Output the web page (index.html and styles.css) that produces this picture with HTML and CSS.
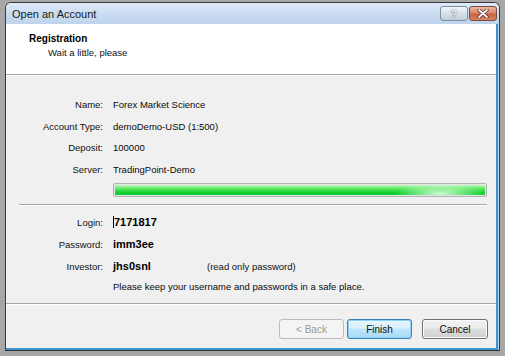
FILE: index.html
```html
<!DOCTYPE html>
<html>
<head>
<meta charset="utf-8">
<link rel="stylesheet" href="styles.css">
</head>
<body>
<div class="window">
  <div class="titlebar">
    <span class="title">Open an Account</span>
    <div class="caption-buttons">
      <div class="cap help"><span>?</span></div>
      <div class="cap close">
        <svg width="14" height="9" viewBox="0 0 14 9"><path d="M3 1 L11 8 M11 1 L3 8" stroke="#4a2a22" stroke-width="3.2" stroke-linecap="round"/><path d="M3 1 L11 8 M11 1 L3 8" stroke="#ffffff" stroke-width="1.7" stroke-linecap="round"/></svg>
      </div>
    </div>
  </div>
  <div class="client">
    <div class="header">
      <div class="h-title">Registration</div>
      <div class="h-sub">Wait a little, please</div>
    </div>
    <div class="hsep"></div>
    <div class="body">
      <div class="grid info">
        <div class="lbl">Name:</div><div class="val">Forex Market Science</div>
        <div class="lbl">Account Type:</div><div class="val">demoDemo-USD (1:500)</div>
        <div class="lbl">Deposit:</div><div class="val">100000</div>
        <div class="lbl">Server:</div><div class="val">TradingPoint-Demo</div>
      </div>
      <div class="progress"><div class="fill"></div></div>
      <div class="sep"></div>
      <div class="grid creds">
        <div class="lbl">Login:</div><div class="val bold"><span class="caret"></span>7171817</div>
        <div class="lbl">Password:</div><div class="val bold">imm3ee</div>
        <div class="lbl">Investor:</div><div class="val"><span class="bold inv">jhs0snl</span><span class="note">(read only password)</span></div>
        <div class="lbl last"></div><div class="val last">Please keep your username and passwords in a safe place.</div>
      </div>
      <div class="bsep"></div>
      <div class="buttons">
        <div class="btn disabled">&lt; Back</div>
        <div class="btn default">Finish</div>
        <div class="btn normal">Cancel</div>
      </div>
    </div>
  </div>
</div>
</body>
</html>
```

FILE: styles.css
```css
* { box-sizing: border-box; }
html, body { margin: 0; padding: 0; }
body {
  width: 505px;
  height: 356px;
  background: #a7a7a7;
  font-family: "Liberation Sans", Arial, sans-serif;
  font-size: 9.5px;
  color: #111;
  overflow: hidden;
}
.window {
  margin: 2px 0 0 5px;
  width: 495px;
  height: 349px;
  border: 1px solid #3a3a3a;
  border-bottom: 1px solid #2f2f2f;
  border-radius: 6px 6px 0 0;
  background: linear-gradient(#e2ecf8, #c6daef 22px, #bdd3ec);
  display: flex;
  flex-direction: column;
  overflow: hidden;
}
.titlebar {
  height: 21px;
  flex: none;
  display: flex;
  align-items: center;
  padding-left: 6px;
  background: linear-gradient(#dfeaf7, #c8dbf0 55%, #bfd5ed);
}
.title { font-size: 11px; color: #1a1a1a; flex: 1; padding-top: 1px; }
.caption-buttons { display: flex; gap: 1px; margin-right: 2px; margin-top: 3px; align-self: flex-start; }
.cap {
  width: 28px;
  height: 15px;
  border-radius: 3px;
  display: flex;
  align-items: center;
  justify-content: center;
}
.help {
  border: 1px solid #7d8ea3;
  background: linear-gradient(#f0f4f8, #d7e0ea 50%, #c2cfdd);
  font-size: 11px;
  font-weight: bold;
  color: #f6f8fb;
  text-shadow: 0 0 1px #56667a, 0 0 1px #56667a;
}
.close {
  border: 1px solid #7a4a3e;
  background: linear-gradient(#eab8a0, #d9866a 45%, #c8623f 55%, #d5845f);
}
.client {
  flex: 1;
  display: flex;
  flex-direction: column;
  border-right: 2px solid #3b95cf;
  border-bottom: 2px solid #3b95cf;
  margin-right: 1px;
}
.header {
  height: 50px;
  background: #ffffff;
  padding: 8px 0 0 23px;
  line-height: 13px;
}
.h-title { font-weight: bold; font-size: 10px; color: #000; }
.h-sub { padding-left: 19px; margin-top: 1px; }
.hsep { height: 2px; border-top: 1px solid #a6a6a6; border-bottom: 1px solid #ffffff; }
.body {
  flex: 1;
  background: #f0f0f0;
  display: flex;
  flex-direction: column;
}
.grid {
  display: grid;
  grid-template-columns: 97px 1fr;
  column-gap: 10px;
  line-height: 13px;
}
.info { padding-top: 22px; row-gap: 8.5px; }
.lbl { text-align: right; color: #111; }
.val { color: #0a0a0a; white-space: nowrap; }
.bold { font-weight: bold; font-size: 11px; color: #000; }
.caret { display: inline-block; width: 1px; height: 12px; background: #000; vertical-align: -2px; }
.inv { display: inline-block; width: 94px; }
.note { color: #111; }
.last { margin-top: -2px; }
.progress {
  margin: 7px 0 0 107px;
  width: 374px;
  height: 14px;
  border: 1px solid #b2b2b2;
  border-radius: 2px;
  background: #e6e6e6;
  padding: 1px;
}
.fill {
  height: 100%;
  border-radius: 1px;
  background:
    radial-gradient(ellipse 45px 10px at 325px 85%, rgba(225,255,225,0.9), rgba(225,255,225,0) 100%),
    linear-gradient(#c6f7c6, #7aec7a 25%, #3fe14d 50%, #14d030 75%, #0cce2c);
}
.sep {
  margin: 7px 0 0 13px;
  width: 468px;
  height: 2px;
  border-top: 1px solid #a8a8a8;
  border-bottom: 1px solid #ffffff;
}
.creds { padding-top: 10px; row-gap: 9.3px; }
.bsep {
  margin-top: 10px;
  height: 2px;
  border-top: 1px solid #a8a8a8;
  border-bottom: 1px solid #ffffff;
}
.buttons {
  display: flex;
  justify-content: flex-end;
  padding: 14px 8px 0 0;
}
.btn {
  width: 65px;
  height: 20px;
  border-radius: 3px;
  display: flex;
  align-items: center;
  justify-content: center;
  font-size: 10px;
  color: #111;
}
.disabled {
  border: 1px solid #b9bdc1;
  background: #f4f4f4;
  color: #9a9a9a;
}
.default {
  margin-left: 3px;
  border: 1px solid #3c7fb1;
  background: linear-gradient(#eaf6fd, #d9f0fc 45%, #bee6fd 50%, #a7d9f5);
  box-shadow: inset 0 0 0 1px #8ed3f6;
}
.normal {
  margin-left: 10px;
  width: 66px;
  border: 1px solid #707070;
  background: linear-gradient(#f2f2f2, #ebebeb 45%, #dddddd 50%, #cfcfcf);
  box-shadow: inset 0 0 0 1px #fbfbfb;
}
```
